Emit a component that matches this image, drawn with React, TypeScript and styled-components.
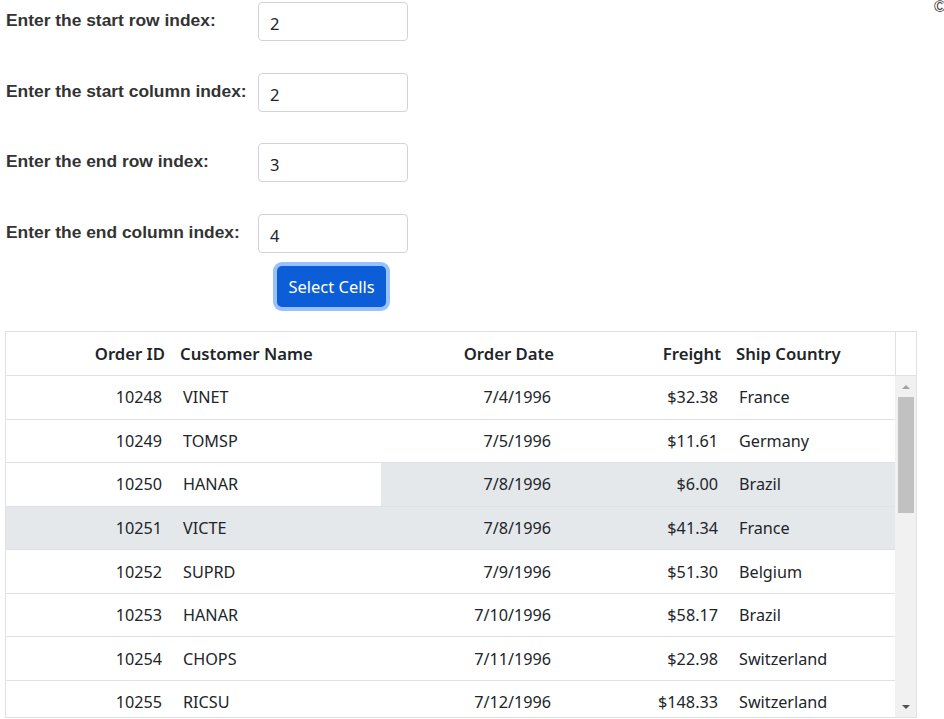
import React from 'react';
import styled, { createGlobalStyle } from 'styled-components';

type Order = {
  id: number;
  customer: string;
  date: string;
  freight: string;
  country: string;
};

const orders: Order[] = [
  { id: 10248, customer: 'VINET', date: '7/4/1996', freight: '$32.38', country: 'France' },
  { id: 10249, customer: 'TOMSP', date: '7/5/1996', freight: '$11.61', country: 'Germany' },
  { id: 10250, customer: 'HANAR', date: '7/8/1996', freight: '$6.00', country: 'Brazil' },
  { id: 10251, customer: 'VICTE', date: '7/8/1996', freight: '$41.34', country: 'France' },
  { id: 10252, customer: 'SUPRD', date: '7/9/1996', freight: '$51.30', country: 'Belgium' },
  { id: 10253, customer: 'HANAR', date: '7/10/1996', freight: '$58.17', country: 'Brazil' },
  { id: 10254, customer: 'CHOPS', date: '7/11/1996', freight: '$22.98', country: 'Switzerland' },
  { id: 10255, customer: 'RICSU', date: '7/12/1996', freight: '$148.33', country: 'Switzerland' },
];

const fields = [
  { label: 'Enter the start row index:', value: '2' },
  { label: 'Enter the start column index:', value: '2' },
  { label: 'Enter the end row index:', value: '3' },
  { label: 'Enter the end column index:', value: '4' },
];

// selection range (start row 2 col 2 -> end row 3 col 4), flowing across rows
const isSelected = (row: number, col: number) => {
  const start = 2 * 5 + 2;
  const end = 3 * 5 + 4;
  const idx = row * 5 + col;
  return idx >= start && idx <= end;
};

const App: React.FC = () => {
  return (
    <Page>
      <GlobalStyle />
      <Corner>©</Corner>
      <Form>
        {fields.map((f) => (
          <FieldRow key={f.label}>
            <Label>{f.label}</Label>
            <Input defaultValue={f.value} />
          </FieldRow>
        ))}
        <ButtonRow>
          <SelectButton>Select Cells</SelectButton>
        </ButtonRow>
      </Form>
      <Grid>
        <HeaderRow>
          <HeadCell $align="right">Order ID</HeadCell>
          <HeadCell>Customer Name</HeadCell>
          <HeadCell $align="right">Order Date</HeadCell>
          <HeadCell $align="right">Freight</HeadCell>
          <HeadCell>Ship Country</HeadCell>
          <HeadSpacer />
        </HeaderRow>
        <Body>
          <Rows>
            {orders.map((o, r) => (
              <Row key={o.id}>
                <Cell $align="right" $selected={isSelected(r, 0)}>{o.id}</Cell>
                <Cell $selected={isSelected(r, 1)}>{o.customer}</Cell>
                <Cell $align="right" $selected={isSelected(r, 2)}>{o.date}</Cell>
                <Cell $align="right" $selected={isSelected(r, 3)}>{o.freight}</Cell>
                <Cell $selected={isSelected(r, 4)}>{o.country}</Cell>
              </Row>
            ))}
          </Rows>
          <ScrollBar>
            <Arrow $up />
            <Thumb />
            <Track />
            <Arrow />
          </ScrollBar>
        </Body>
      </Grid>
    </Page>
  );
};

export default App;

const GlobalStyle = createGlobalStyle`
  body {
    margin: 0;
    background: #fff;
    color: #212529;
  }
`;

const uiFont = `"Segoe UI", "Noto Sans", "Open Sans", sans-serif`;

const Page = styled.div`
  position: relative;
  padding: 2px 0 0 5px;
  width: 944px;
  height: 719px;
  box-sizing: border-box;
  overflow: hidden;
`;

const Corner = styled.div`
  position: absolute;
  top: -2px;
  left: 934px;
  font: 16px "Liberation Sans", Arial, sans-serif;
  color: #333;
`;

const Form = styled.div`
  display: flex;
  flex-direction: column;
`;

const FieldRow = styled.div`
  display: grid;
  grid-template-columns: 253px 150px;
  align-items: start;
  height: 70.5px;
`;

const Label = styled.label`
  font: bold 17.4px "Liberation Sans", Arial, sans-serif;
  color: #333;
  padding: 8px 0 0 1px;
  white-space: nowrap;
`;

const Input = styled.input`
  box-sizing: border-box;
  width: 150px;
  height: 39px;
  border: 1px solid #ced4da;
  border-radius: 4px;
  padding: 4px 11px 0;
  font: 16.5px ${uiFont};
  color: #212529;
  outline: none;
`;

const ButtonRow = styled.div`
  margin-top: -18px;
  padding-left: 272px;
  display: flex;
`;

const SelectButton = styled.button`
  box-sizing: border-box;
  width: 109px;
  height: 41px;
  border: none;
  border-radius: 5px;
  background: #0b5ed7;
  color: #fff;
  font: 16.5px ${uiFont};
  box-shadow: 0 0 0 4px #98c1fe;
  cursor: pointer;
`;

const Grid = styled.div`
  margin-top: 24px;
  width: 912px;
  border: 1px solid #dee2e6;
  box-sizing: border-box;
  font-family: ${uiFont};
  color: #212529;
`;

const columns = `166px 209px 180px 167px 167px`;

const HeaderRow = styled.div`
  display: grid;
  grid-template-columns: ${columns} 1fr;
  height: 43px;
  border-bottom: 1px solid #dee2e6;
`;

const HeadCell = styled.div<{ $align?: 'left' | 'right' }>`
  display: flex;
  align-items: center;
  justify-content: ${(p) => (p.$align === 'right' ? 'flex-end' : 'flex-start')};
  padding: 0 7px 0 8px;
  font-size: 16.7px;
  font-weight: 600;
  white-space: nowrap;
`;

const HeadSpacer = styled.div`
  border-left: 1px solid #dee2e6;
`;

const Body = styled.div`
  display: flex;
  height: 341px;
  overflow: hidden;
`;

const Rows = styled.div`
  width: 889px;
  display: flex;
  flex-direction: column;
`;

const Row = styled.div`
  display: grid;
  grid-template-columns: ${columns};
  height: 43.57px;
  flex-shrink: 0;
  box-sizing: border-box;
  border-bottom: 1px solid #dee2e6;
`;

const Cell = styled.div<{ $align?: 'left' | 'right'; $selected?: boolean }>`
  display: flex;
  align-items: center;
  justify-content: ${(p) => (p.$align === 'right' ? 'flex-end' : 'flex-start')};
  padding: 0 10px 0 11px;
  font-size: 16.2px;
  white-space: nowrap;
  background: ${(p) => (p.$selected ? '#e5e8eb' : '#fff')};
`;

const ScrollBar = styled.div`
  width: 21px;
  background: #f1f1f1;
  display: flex;
  flex-direction: column;
  align-items: center;
`;

const Arrow = styled.div<{ $up?: boolean }>`
  height: 21px;
  width: 21px;
  display: flex;
  align-items: center;
  justify-content: center;
  &::after {
    content: '';
    border-left: 4px solid transparent;
    border-right: 4px solid transparent;
    ${(p) =>
      p.$up
        ? 'border-bottom: 4px solid #a3a3a3;'
        : 'border-top: 4px solid #505050;'}
  }
`;

const Thumb = styled.div`
  width: 16px;
  height: 116px;
  background: #c1c1c1;
`;

const Track = styled.div`
  flex: 1;
`;
